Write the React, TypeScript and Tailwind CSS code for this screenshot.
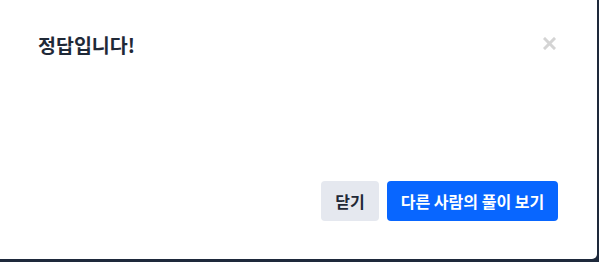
import React from "react";

export default function App() {
  return (
    <div className="w-[599px] h-[262px] bg-[#1e293b] overflow-hidden" style={{ fontFamily: '"Noto Sans CJK KR", "Noto Sans", sans-serif' }}>
      <div className="w-[597px] h-[259px] bg-white rounded-br-[5px] flex flex-col justify-between pl-[38px] pr-[39px] pt-[30px] pb-[38px]">
        {/* Header */}
        <div className="flex items-start justify-between">
          <h2 className="text-[19.5px] leading-[30px] font-bold text-[#1f2937]">정답입니다!</h2>
          <button aria-label="닫기" className="mt-[7px] mr-[2px] w-[13px] h-[13px] flex items-center justify-center text-[#d4d4d4]">
            <svg width="13" height="13" viewBox="0 0 13 13" fill="none" stroke="currentColor" strokeWidth="3" strokeLinecap="square">
              <line x1="2" y1="2" x2="11" y2="11" />
              <line x1="11" y1="2" x2="2" y2="11" />
            </svg>
          </button>
        </div>

        {/* Footer buttons */}
        <div className="flex justify-end gap-2">
          <button className="w-[58px] h-[40px] rounded-[4px] bg-[#e5e8ef] text-[#1f2937] text-[16px] font-bold flex items-center justify-center">
            닫기
          </button>
          <button className="w-[171px] h-[40px] rounded-[4px] bg-[#0866ff] text-white text-[16px] font-bold flex items-center justify-center">
            다른 사람의 풀이 보기
          </button>
        </div>
      </div>
    </div>
  );
}
